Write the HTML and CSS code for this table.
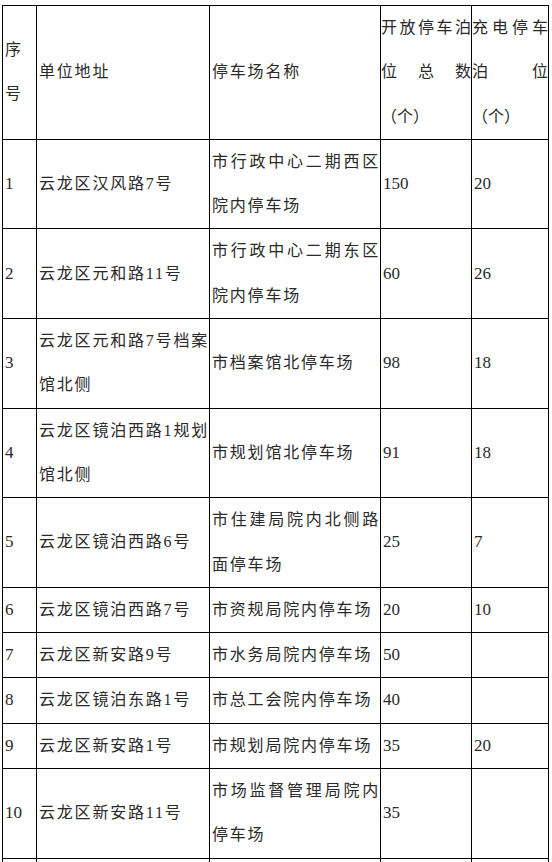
FILE: index.html
```html
<!DOCTYPE html>
<html lang="zh-CN">
<head>
<meta charset="utf-8">
<title>停车场</title>
<link rel="stylesheet" href="styles.css">
</head>
<body>
<table class="grid">
  <colgroup>
    <col class="c1"><col class="c2"><col class="c3"><col class="c4"><col class="c5">
  </colgroup>
  <tr>
    <td>序号</td>
    <td>单位地址</td>
    <td>停车场名称</td>
    <td class="hd">
      <div class="jl">开放停车泊</div>
      <div class="jl">位 总 数</div>
      <div>（个）</div>
    </td>
    <td class="hd">
      <div class="jl">充电停车</div>
      <div class="jl">泊 位</div>
      <div>（个）</div>
    </td>
  </tr>
  <tr><td class="num">1</td><td>云龙区汉风路7号</td><td>市行政中心二期西区院内停车场</td><td class="num">150</td><td class="num">20</td></tr>
  <tr><td class="num">2</td><td>云龙区元和路11号</td><td>市行政中心二期东区院内停车场</td><td class="num">60</td><td class="num">26</td></tr>
  <tr><td class="num">3</td><td>云龙区元和路7号档案馆北侧</td><td>市档案馆北停车场</td><td class="num">98</td><td class="num">18</td></tr>
  <tr><td class="num">4</td><td>云龙区镜泊西路1规划馆北侧</td><td>市规划馆北停车场</td><td class="num">91</td><td class="num">18</td></tr>
  <tr><td class="num">5</td><td>云龙区镜泊西路6号</td><td>市住建局院内北侧路面停车场</td><td class="num">25</td><td class="num">7</td></tr>
  <tr><td class="num">6</td><td>云龙区镜泊西路7号</td><td>市资规局院内停车场</td><td class="num">20</td><td class="num">10</td></tr>
  <tr><td class="num">7</td><td>云龙区新安路9号</td><td>市水务局院内停车场</td><td class="num">50</td><td class="num"></td></tr>
  <tr><td class="num">8</td><td>云龙区镜泊东路1号</td><td>市总工会院内停车场</td><td class="num">40</td><td class="num"></td></tr>
  <tr><td class="num">9</td><td>云龙区新安路1号</td><td>市规划局院内停车场</td><td class="num">35</td><td class="num">20</td></tr>
  <tr><td class="num">10</td><td>云龙区新安路11号</td><td>市场监督管理局院内停车场</td><td class="num">35</td><td class="num"></td></tr>
  <tr class="more"><td></td><td></td><td></td><td></td><td></td></tr>
</table>
</body>
</html>
```
FILE: styles.css
```css
html, body {
  margin: 0;
  padding: 0;
  background: #fff;
}
body {
  padding: 5px 0 0 2px;
  font-family: "Liberation Serif", "Noto Sans CJK SC", serif;
  font-size: 16px;
  color: #2a2a2a;
}
.grid {
  border-collapse: collapse;
  table-layout: fixed;
  width: 547px;
}
.c1 { width: 34px; }
.c2 { width: 173px; }
.c3 { width: 171px; }
.c4 { width: 91px; }
.c5 { width: 77px; }
.grid td {
  border: 1px solid #000;
  padding: 0 0 0 2px;
  vertical-align: middle;
  text-align: justify;
  line-height: 44.3px;
  letter-spacing: 1.8px;
  word-break: break-all;
}
.grid td.num {
  letter-spacing: 0;
  font-size: 17px;
}
.grid td.hd {
  padding: 0;
  letter-spacing: 0;
}
.jl {
  text-align: justify;
  text-align-last: justify;
}
.more td {
  height: 44px;
}
```
